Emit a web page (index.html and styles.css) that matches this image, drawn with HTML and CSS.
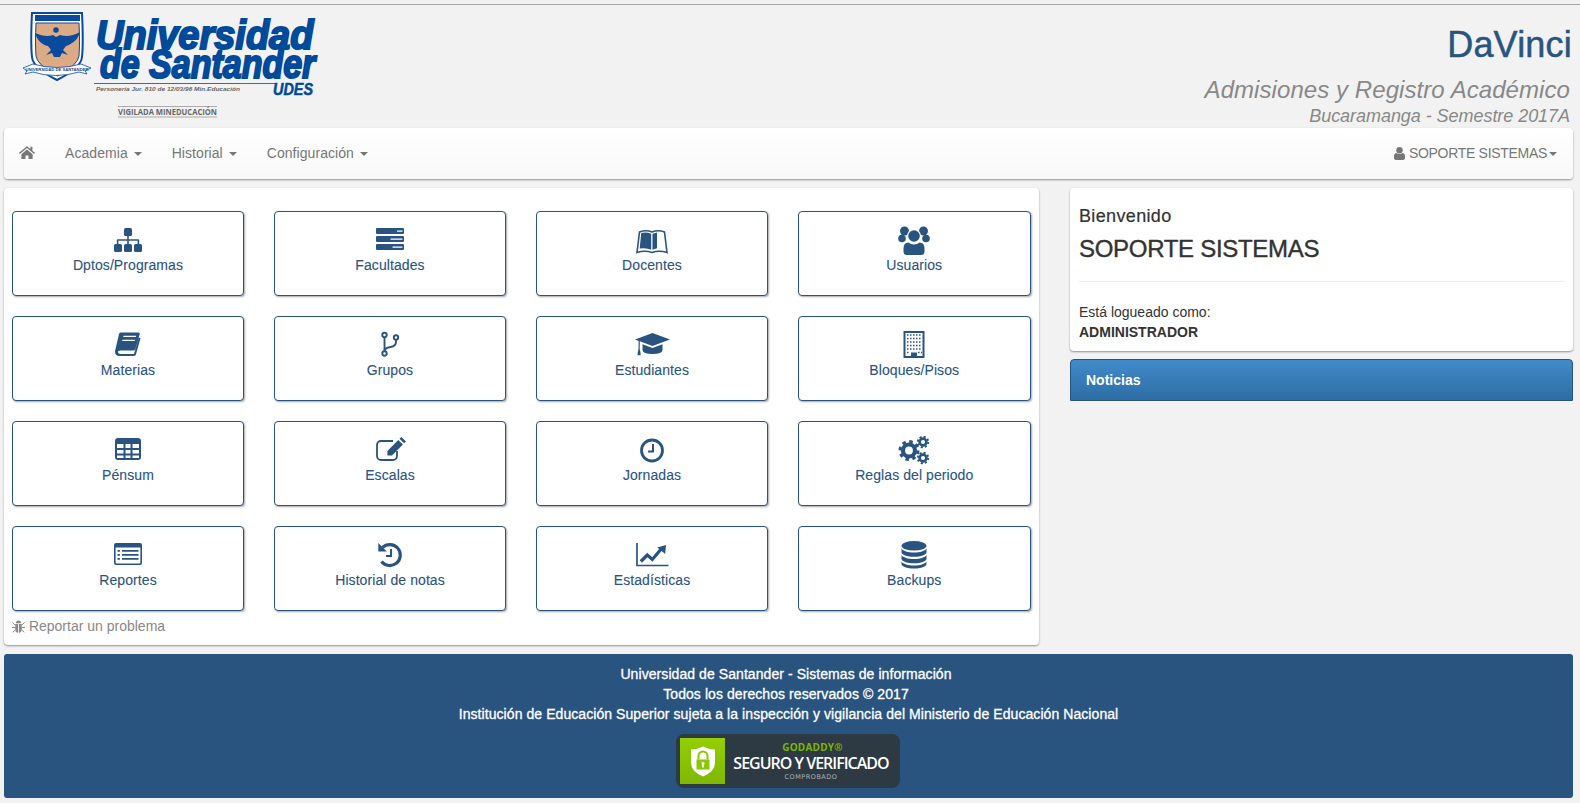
FILE: index.html
```html
<!DOCTYPE html>
<html lang="es">
<head>
    <meta charset="UTF-8">
    <title>DaVinci - Admisiones y Registro Académico</title>
    <link rel="stylesheet" href="styles.css">
</head>
<body>
    <!-- Icon set used by the tiles and the menu -->
    <svg class="icon-defs" xmlns="http://www.w3.org/2000/svg">
        <symbol id="i-sitemap" viewBox="0 0 36 30">
            <rect x="14" y="3" width="8" height="8" rx="1.5"/>
            <rect x="4" y="19" width="8" height="8" rx="1.5"/>
            <rect x="14" y="19" width="8" height="8" rx="1.5"/>
            <rect x="24" y="19" width="8" height="8" rx="1.5"/>
            <path d="M17.2 11h1.6v3.2h9.4a1 1 0 0 1 1 1V19h-1.6v-3.2h-8.8V19h-1.6v-3.2H8.4V19H6.8v-3.8a1 1 0 0 1 1-1h9.4z"/>
        </symbol>
        <symbol id="i-server" viewBox="0 0 36 30">
            <path fill-rule="evenodd" d="M5 3h26a1 1 0 0 1 1 1v4a1 1 0 0 1-1 1H5a1 1 0 0 1-1-1V4a1 1 0 0 1 1-1zm20 2.4v1.3h5.6V5.400zM5 11h26a1 1 0 0 1 1 1v4a1 1 0 0 1-1 1H5a1 1 0 0 1-1-1v-4a1 1 0 0 1 1-1zm13.500 2.400v1.300h12v-1.300zM5 19h26a1 1 0 0 1 1 1v4a1 1 0 0 1-1 1H5a1 1 0 0 1-1-1v-4a1 1 0 0 1 1-1zm15.500 2.400v1.300h10v-1.300z"/>
        </symbol>
        <symbol id="i-openbook" viewBox="0 0 36 30">
            <path class="i-line" stroke-width="1.600" d="M3 27.500 5.500 7Q12 4.500 18 7q6-2.500 12.500 0L33 27.500q-8-2.500-15 0-7-2.500-15 0z"/>
            <path d="M7.200 8q5-1.500 10 .8v16q-5-2.300-11.500-1.200zM18.500 8.800l4.500-1.300v15.800l-4.500 1.500z"/>
        </symbol>
        <symbol id="i-users" viewBox="0 0 36 30">
            <circle cx="8.500" cy="6" r="4.500"/>
            <circle cx="27.500" cy="6" r="4.500"/>
            <circle cx="6" cy="13.500" r="3.800"/>
            <circle cx="30" cy="13.500" r="3.800"/>
            <circle cx="18" cy="11" r="7" class="i-knock"/>
            <path class="i-knock" d="M6 30V23q0-7 7-7h10q7 0 7 7v7z"/>
            <circle cx="18" cy="11" r="5.800"/>
            <path d="M7.500 26.500v-3q0-6 5-6 2 2 5.500 2t5.500-2q5 0 5 6v3q0 3.500-3.500 3.500h-14q-3.500 0-3.500-3.500z"/>
        </symbol>
        <symbol id="i-book" viewBox="0 0 36 30">
            <path fill-rule="evenodd" d="M10.500 2.500h18q1.600 0 1.200 1.600L25.300 19q-.5 1.500-2 1.500H10.500q-2.800 0-2.500 1.800.3 1.700 2.500 1.700H24L28.800 7.500l1.700.8-4.500 16q-.5 1.700-2 1.700H9.500Q5 26 5 21.500q0-1.200.5-2.500L9 4q.3-1.500 1.500-1.500zM13.600 5.800l-.4 1.300h12.600l.4-1.300zM12.500 9.700l-.4 1.300h12.600l.4-1.300z"/>
        </symbol>
        <symbol id="i-fork" viewBox="0 0 36 30">
            <g class="i-line" stroke-width="1.900">
                <circle cx="12.500" cy="5" r="2.200"/>
                <circle cx="12.500" cy="23.500" r="2.200"/>
                <circle cx="24" cy="7.500" r="2.200"/>
                <path d="M12.500 7.200v14.100M24 9.700v2.300q0 4-5.500 5-6 1-6 4.300"/>
            </g>
        </symbol>
        <symbol id="i-cap" viewBox="0 0 36 30">
            <path d="M18.500 3 36 9.500 18.500 16 5.800 11.300l-.1 8q1 3 1 6H3.500q0-3 1-6l.1-8.400L1 9.500z"/>
            <path d="M8.500 14.300l10 3.700 10-3.700V20q0 4-10 4-10 0-10-4z"/>
        </symbol>
        <symbol id="i-building" viewBox="0 0 36 30">
            <path fill-rule="evenodd" d="M7.500 1h21v27h-21zM9.500 3v23h5.500v-3.500h6V26h5.500V3z"/>
            <path class="i-line i-dots" d="M11 5h15M11 8.500h15M11 12h15M11 15.500h15M11 19h15M11 22.500h3M22 22.500h4"/>
        </symbol>
        <symbol id="i-table" viewBox="0 0 36 30">
            <path fill-rule="evenodd" d="M8 3h20a3 3 0 0 1 3 3v16a3 3 0 0 1-3 3H8a3 3 0 0 1-3-3V6a3 3 0 0 1 3-3zM7 9v4h6.500V9zm8.500 0v4h5V9zm7 0v4H29V9zM7 15v3.500h6.500V15zm8.500 0v3.500h5V15zm7 0v3.500H29V15zM7 20.500V23h6.500v-2.500zm8.500 0V23h5v-2.500zm7 0V23H29v-2.500z"/>
        </symbol>
        <symbol id="i-edit" viewBox="0 0 36 30">
            <path class="i-line" stroke-width="1.800" d="M25 16v5a4 4 0 0 1-4 4H9a4 4 0 0 1-4-4V10a4 4 0 0 1 4-4h12"/>
            <path d="M26.300 5 30.900 9.500 20 20.500h-4.600V16zM27.500 3.800l1.800-1.800 4.600 4.500-1.800 1.800z"/>
        </symbol>
        <symbol id="i-clock" viewBox="0 0 36 30">
            <circle class="i-line" stroke-width="2.800" cx="18" cy="15.500" r="10.500"/>
            <path class="i-line" stroke-width="2" d="M19 9v7.500h-5"/>
        </symbol>
        <symbol id="i-cogs" viewBox="0 0 36 30">
            <g class="i-line">
                <circle stroke-width="4.200" cx="13" cy="15.500" r="6"/>
                <circle class="i-teeth-l" stroke-width="3" cx="13" cy="15.500" r="9"/>
                <circle stroke-width="2.600" cx="27" cy="7" r="3.400"/>
                <circle class="i-teeth-s" stroke-width="2" cx="27" cy="7" r="5.200"/>
                <circle stroke-width="2.600" cx="27" cy="23" r="3.400"/>
                <circle class="i-teeth-s" stroke-width="2" cx="27" cy="23" r="5.200"/>
            </g>
        </symbol>
        <symbol id="i-list" viewBox="0 0 36 30">
            <path fill-rule="evenodd" d="M6 3h24a2 2 0 0 1 2 2v18a2 2 0 0 1-2 2H6a2 2 0 0 1-2-2V5a2 2 0 0 1 2-2zM5.600 7.500V22.500a1 1 0 0 0 1 1h22.800a1 1 0 0 0 1-1V7.500z"/>
            <path d="M7.500 10h2.400v1.800H7.500zM12 10h16.500v1.800H12zM7.500 14h2.400v1.800H7.500zM12 14h16.500v1.800H12zM7.500 18h2.400v1.800H7.500zM12 18h16.500v1.800H12z"/>
        </symbol>
        <symbol id="i-history" viewBox="0 0 36 30">
            <path class="i-line" stroke-width="3.200" d="M10.500 7.500a10.500 10.500 0 1 1-1 14"/>
            <path d="M6.300 3v8.500h8.500z"/>
            <path class="i-line" stroke-width="2" d="M19 9v7h-5"/>
        </symbol>
        <symbol id="i-chart" viewBox="0 0 36 30">
            <path class="i-line" stroke-width="1.700" d="M3 3v22.500h31.500"/>
            <path class="i-line" stroke-width="3.200" d="M6.800 21.500l6.500-6.500 5 4.500 8.500-10"/>
            <path d="M23.300 7.500l8.700-2.500-.8 9z"/>
        </symbol>
        <symbol id="i-database" viewBox="0 0 36 30">
            <ellipse cx="18" cy="5.800" rx="12.500" ry="4.800"/>
            <path d="M5.500 8.500v3.800c0 2.500 5.500 4.500 12.500 4.500s12.500-2 12.500-4.500V8.500c-1.500 2.500-6.500 4-12.500 4S7 11 5.500 8.500z"/>
            <path d="M5.500 15v3.800c0 2.500 5.500 4.500 12.500 4.500s12.500-2 12.500-4.500V15c-1.500 2.500-6.500 4-12.500 4S7 17.500 5.500 15z"/>
            <path d="M5.500 21.500V24c0 2.500 5.500 4.500 12.500 4.500s12.500-2 12.500-4.500v-2.500c-1.500 2.500-6.500 4-12.500 4s-11-1.500-12.500-4z"/>
        </symbol>
        <symbol id="i-home" viewBox="0 0 16 13">
            <path d="M8 .200 0 6.800l.9 1.100L8 2.100l7.100 5.800.9-1.100-2.600-2.100V.8h-2v2.300z"/>
            <path d="M2.400 8.200 8 3.600l5.600 4.600V13H9.500V9.500h-3V13H2.400z"/>
        </symbol>
        <symbol id="i-user" viewBox="0 0 11 13">
            <circle cx="5.500" cy="3.300" r="3.200"/>
            <path d="M0 11V9.500Q0 6.300 2.500 6.100q1.200 1 3 1t3-1Q11 6.300 11 9.500V11q0 2-2 2H2q-2 0-2-2z"/>
        </symbol>
        <symbol id="i-bug" viewBox="0 0 13 13">
            <path d="M3.800 3.300Q4 .5 6.500.5t2.700 2.800zM3.200 4h2.900v8.700Q3.200 12.500 3.200 9zM6.900 4h2.900v5q0 3.500-2.900 3.700z"/>
            <path d="M.500 2.500 3 4.800M12.500 2.500 10 4.800M0 7.500h3M10 7.500h3M.700 12.300 3.300 10M12.300 12.300 9.700 10" class="i-line"/>
        </symbol>
    </svg>

    <header class="page-header">
        <svg class="logo" viewBox="20 8 310 115" xmlns="http://www.w3.org/2000/svg">
            <!-- Crest -->
            <path class="crest-border" d="M32 13h50q1.500 30 0 44-1 11-25 23Q33 68 32 57q-1.500-14 0-44z"/>
            <path class="crest-field" d="M36 23h43q1 20 0 33-1 9-21.500 20Q37 65 36 56q-1-13 0-33z"/>
            <path class="crest-dash" d="M35 18h45"/>
            <circle class="crest-blue" cx="56" cy="30" r="2.800"/>
            <path class="crest-blue" d="M35 33c7 3 13 4 18 2l3 2 4-2c6 2 13 1 20-3-2 8-8 12-14 14l-3 4 5 5-6-2-2 4h-6l-2-4-6 2 5-5-3-4C42 45 37 40 35 33z"/>
            <path class="crest-ribbon" d="M23 68l10-4q24 7 48 0l10 4-6 3 2 3-8-2q-24 7-46 0l-8 2 2-3z"/>
            <text class="crest-text" x="57" y="71" text-anchor="middle">UNIVERSIDAD DE SANTANDER</text>
            <!-- Wordmark -->
            <text class="logo-word" transform="translate(96 49) scale(.95 1)">Universidad</text>
            <text class="logo-word" transform="translate(100 78) scale(.85 1)">de Santander</text>
            <path class="logo-rule" d="M94 83.500h181"/>
            <text class="logo-legal" x="96" y="90.500" textLength="144" lengthAdjust="spacingAndGlyphs">Personería Jur. 810 de 12/03/96 Min.Educación</text>
            <text class="logo-udes" x="273" y="95" textLength="40" lengthAdjust="spacingAndGlyphs">UDES</text>
            <path class="logo-vigilada-rule" d="M118 106.500h99M118 117h99"/>
            <text class="logo-vigilada" x="118" y="115" textLength="99" lengthAdjust="spacingAndGlyphs">VIGILADA MINEDUCACIÓN</text>
        </svg>
        <div class="app-title">
            <h1>DaVinci</h1>
            <h3>Admisiones y Registro Académico</h3>
            <h4>Bucaramanga - Semestre 2017A</h4>
        </div>
    </header>

    <nav class="navbar">
        <ul class="nav-list">
            <li><a href="#" class="nav-home"><svg class="icon-home"><use href="#i-home"/></svg></a></li>
            <li><a href="#">Academia <span class="caret"></span></a></li>
            <li><a href="#">Historial <span class="caret"></span></a></li>
            <li><a href="#">Configuración <span class="caret"></span></a></li>
        </ul>
        <a href="#" class="nav-user"><svg class="icon-user"><use href="#i-user"/></svg> SOPORTE SISTEMAS<span class="caret"></span></a>
    </nav>

    <main class="content">
        <section class="panel">
            <div class="tiles">
                <a href="#" class="tile"><svg class="tile-icon"><use href="#i-sitemap"/></svg>Dptos/Programas</a>
                <a href="#" class="tile"><svg class="tile-icon"><use href="#i-server"/></svg>Facultades</a>
                <a href="#" class="tile"><svg class="tile-icon"><use href="#i-openbook"/></svg>Docentes</a>
                <a href="#" class="tile"><svg class="tile-icon"><use href="#i-users"/></svg>Usuarios</a>
                <a href="#" class="tile"><svg class="tile-icon"><use href="#i-book"/></svg>Materias</a>
                <a href="#" class="tile"><svg class="tile-icon"><use href="#i-fork"/></svg>Grupos</a>
                <a href="#" class="tile"><svg class="tile-icon"><use href="#i-cap"/></svg>Estudiantes</a>
                <a href="#" class="tile"><svg class="tile-icon"><use href="#i-building"/></svg>Bloques/Pisos</a>
                <a href="#" class="tile"><svg class="tile-icon"><use href="#i-table"/></svg>Pénsum</a>
                <a href="#" class="tile"><svg class="tile-icon"><use href="#i-edit"/></svg>Escalas</a>
                <a href="#" class="tile"><svg class="tile-icon"><use href="#i-clock"/></svg>Jornadas</a>
                <a href="#" class="tile"><svg class="tile-icon"><use href="#i-cogs"/></svg>Reglas del periodo</a>
                <a href="#" class="tile"><svg class="tile-icon"><use href="#i-list"/></svg>Reportes</a>
                <a href="#" class="tile"><svg class="tile-icon"><use href="#i-history"/></svg>Historial de notas</a>
                <a href="#" class="tile"><svg class="tile-icon"><use href="#i-chart"/></svg>Estadísticas</a>
                <a href="#" class="tile"><svg class="tile-icon"><use href="#i-database"/></svg>Backups</a>
            </div>
            <a href="#" class="report-link"><svg class="icon-bug"><use href="#i-bug"/></svg> Reportar un problema</a>
        </section>

        <aside class="sidebar">
            <div class="welcome">
                <h4>Bienvenido</h4>
                <h3>SOPORTE SISTEMAS</h3>
                <hr>
                <p>Está logueado como:<br><strong>ADMINISTRADOR</strong></p>
            </div>
            <div class="news-heading">Noticias</div>
        </aside>
    </main>

    <footer class="page-footer">
        <p class="footer-lead">Universidad de Santander - Sistemas de información</p>
        <p class="footer-lead">Todos los derechos reservados © 2017</p>
        <p>Institución de Educación Superior sujeta a la inspección y vigilancia del Ministerio de Educación Nacional</p>
        <div class="seal">
            <div class="seal-mark">
                <svg class="seal-shield" viewBox="0 0 24 30" xmlns="http://www.w3.org/2000/svg">
                    <path class="seal-shield-body" d="M12 0q6 3 12 3v13q0 9-12 14Q0 25 0 16V3q6 0 12-3z"/>
                    <path class="seal-shackle" d="M7.500 13V9.500a4.500 4.500 0 0 1 9 0V13"/>
                    <path class="seal-lock" fill-rule="evenodd" d="M5.500 13h13v10h-13zM12 15.500a1.500 1.500 0 0 0-.8 2.800V21h1.600v-2.700a1.500 1.500 0 0 0-.8-2.800z"/>
                </svg>
            </div>
            <div class="seal-text">
                <span class="seal-brand">GODADDY®</span>
                <span class="seal-title">SEGURO Y VERIFICADO</span>
                <span class="seal-note">COMPROBADO</span>
            </div>
        </div>
    </footer>
</body>
</html>
```

FILE: styles.css
```css
* {
    box-sizing: border-box;
}

body {
    margin: 0;
    padding: 4px 7px 0 4px;
    background-color: #f2f2f2;
    color: #333;
    font-family: "Liberation Sans", Arial, sans-serif;
    font-size: 14px;
    line-height: 20px;
}

a {
    color: inherit;
    text-decoration: none;
}

.icon-defs {
    position: absolute;
    width: 0;
    height: 0;
}

/* Shared icon helpers */
.i-line {
    fill: none;
    stroke: currentColor;
}

.i-knock {
    fill: #fff;
}

.i-dots {
    stroke-width: 1.5;
    stroke-dasharray: 1.5 1.5;
}

.i-teeth-l {
    stroke-dasharray: 3.53 3.53;
}

.i-teeth-s {
    stroke-dasharray: 2.04 2.04;
}

/* Header */
.page-header {
    display: flex;
    justify-content: space-between;
    height: 124px;
    margin: 0 -7px 0 -4px;
    padding-right: 8px;
    border-top: 1px solid #a6a6a6;
}

.logo {
    width: 310px;
    height: 115px;
    margin: 3px 0 0 20px;
}

.crest-border {
    fill: #fff;
    stroke: #0a4a9c;
    stroke-width: 2;
}

.crest-field {
    fill: #dcaa84;
    stroke: #0a4a9c;
    stroke-width: 1;
}

.crest-dash {
    fill: none;
    stroke: #0a4a9c;
    stroke-width: 6;
}

.crest-blue {
    fill: #0a4a9c;
}

.crest-ribbon {
    fill: #fff;
    stroke: #0a4a9c;
    stroke-width: .8;
}

.crest-text {
    fill: #0a4a9c;
    font-size: 4.200px;
    font-weight: bold;
}

.logo-word {
    fill: #004a9c;
    stroke: #004a9c;
    stroke-width: 2;
    font-size: 40px;
    font-weight: bold;
    font-style: italic;
}

.logo-rule {
    stroke: #004a9c;
    stroke-width: .8;
}

.logo-legal {
    fill: #666;
    font-size: 6px;
    font-weight: bold;
    font-style: italic;
}

.logo-udes {
    fill: #004a9c;
    stroke: #004a9c;
    stroke-width: .5;
    font-size: 16px;
    font-weight: bold;
    font-style: italic;
}

.logo-vigilada {
    fill: #666;
    font-family: "Open Sans", sans-serif;
    font-size: 8px;
    font-weight: bold;
}

.logo-vigilada-rule {
    stroke: #8c8c8c;
    stroke-width: .7;
}

.app-title {
    text-align: right;
}

.app-title h1 {
    margin: 20px 0 0;
    color: #2a5480;
    font-size: 36px;
    font-weight: 500;
    line-height: 40px;
    letter-spacing: .2px;
    -webkit-text-stroke: .5px #2a5480;
}

.app-title h3 {
    margin: 12px 2px 0 0;
    color: #888;
    font-size: 24px;
    font-style: italic;
    font-weight: 500;
    line-height: 26px;
    letter-spacing: .07px;
}

.app-title h4 {
    margin: 3px 2px 0 0;
    color: #888;
    font-size: 18px;
    font-style: italic;
    font-weight: 500;
    line-height: 20px;
    letter-spacing: -.05px;
}

/* Menu bar */
.navbar {
    display: flex;
    justify-content: space-between;
    align-items: center;
    height: 51px;
    background-image: linear-gradient(to bottom, #fff 0%, #f8f8f8 100%);
    border-radius: 4px;
    box-shadow: 0 1px 2px rgba(0, 0, 0, .4);
    color: #777;
}

.nav-list {
    display: flex;
    margin: 0;
    padding: 0;
    list-style: none;
}

.nav-list a {
    display: block;
    padding: 14px 15px 16px;
    letter-spacing: .06px;
}

.nav-list .nav-home {
    display: flex;
    align-items: center;
    height: 50px;
    padding-top: 11px;
    padding-bottom: 13px;
}

.icon-home {
    display: block;
    width: 16px;
    height: 13px;
    fill: currentColor;
}

.icon-user {
    width: 11px;
    height: 13px;
    vertical-align: -2px;
    fill: currentColor;
}

.caret {
    display: inline-block;
    width: 0;
    height: 0;
    margin-left: 2px;
    vertical-align: middle;
    border-top: 4px solid;
    border-right: 4px solid transparent;
    border-left: 4px solid transparent;
}

.nav-user {
    margin-top: -2px;
    padding-right: 16px;
    letter-spacing: -.3px;
}

/* Main area */
.content {
    display: grid;
    grid-template-columns: 1035px 503px;
    column-gap: 31px;
    align-items: start;
    margin-top: 9px;
}

.panel {
    height: 457px;
    padding: 23px 8px 0;
    background-color: #fff;
    border-radius: 4px;
    box-shadow: 0 1px 2px rgba(0, 0, 0, .4);
}

.tiles {
    display: grid;
    grid-template-columns: repeat(3, 232px) 232.500px;
    gap: 20px 30px;
}

.tile {
    display: flex;
    flex-direction: column;
    align-items: center;
    height: 85px;
    padding-top: 13px;
    background-color: #fff;
    border: 1px solid #2a5480;
    border-radius: 4px;
    box-shadow: 1px 1px 2px rgba(0, 0, 0, .35);
    color: #2a5480;
    letter-spacing: .08px;
    -webkit-text-stroke: .1px #2a5480;
}

.tile-icon {
    flex: none;
    width: 36px;
    height: 30px;
    fill: currentColor;
}

.report-link {
    display: block;
    margin-top: 5px;
    color: #888;
}

.icon-bug {
    width: 13px;
    height: 13px;
    vertical-align: -2px;
    fill: currentColor;
}

.sidebar {
    display: flex;
    flex-direction: column;
    gap: 8px;
}

.welcome {
    height: 163px;
    padding: 18px 9px 0;
    background-color: #fff;
    border-radius: 4px;
    box-shadow: 0 1px 2px rgba(0, 0, 0, .4);
}

.welcome h4 {
    margin: 0;
    font-size: 18px;
    font-weight: 500;
    line-height: 20px;
    letter-spacing: .35px;
    -webkit-text-stroke: .2px #333;
}

.welcome h3 {
    margin: 10px 0 0;
    font-size: 24px;
    font-weight: 500;
    line-height: 26px;
    letter-spacing: -.3px;
    -webkit-text-stroke: .4px #333;
}

.welcome hr {
    margin: 19px 0 20px;
    border: 0;
    border-top: 1px solid #eee;
}

.welcome p {
    margin: 0;
}

.news-heading {
    height: 42px;
    padding: 10px 15px;
    background-image: linear-gradient(to bottom, #428bca 0%, #2e6da4 100%);
    border: 1px solid #28527f;
    border-radius: 4px 4px 0 0;
    color: #fff;
    font-weight: bold;
}

/* Footer */
.page-footer {
    height: 144px;
    margin-top: 9px;
    padding-top: 10px;
    background-color: #2a5480;
    border-radius: 3px;
    color: #fff;
    text-align: center;
    letter-spacing: .07px;
    -webkit-text-stroke: .3px #fff;
}

.page-footer p {
    margin: 0;
}

.page-footer .footer-lead {
    padding-right: 5px;
}

.seal {
    display: flex;
    align-items: center;
    width: 224px;
    height: 54px;
    margin: 10px 0 0 672px;
    padding-left: 4px;
    background-color: #2d3a43;
    border-radius: 8px;
    letter-spacing: 0;
    -webkit-text-stroke: 0;
}

.seal-mark {
    display: flex;
    justify-content: center;
    align-items: center;
    flex: none;
    width: 45px;
    height: 46px;
    background-image: linear-gradient(to bottom, #93cf00 0%, #7fb800 100%);
}

.seal-shield {
    width: 24px;
    height: 31px;
}

.seal-shield-body {
    fill: #fff;
}

.seal-shackle {
    fill: none;
    stroke: #8cc600;
    stroke-width: 2;
}

.seal-lock {
    fill: #8cc600;
}

.seal-text {
    display: flex;
    flex-direction: column;
    align-items: center;
    flex: 1;
    padding-right: 3px;
}

.seal-brand {
    padding-left: 3px;
    color: #7ab800;
    font-family: "Open Sans", sans-serif;
    font-size: 10px;
    font-weight: bold;
    line-height: 12px;
    letter-spacing: .2px;
}

.seal-title {
    font-family: "Open Sans", sans-serif;
    font-size: 16px;
    font-weight: 600;
    line-height: 20px;
    letter-spacing: -1px;
}

.seal-note {
    color: #a9b4ba;
    font-family: "DejaVu Sans", sans-serif;
    font-size: 6.500px;
    line-height: 9px;
    letter-spacing: .5px;
}
```
